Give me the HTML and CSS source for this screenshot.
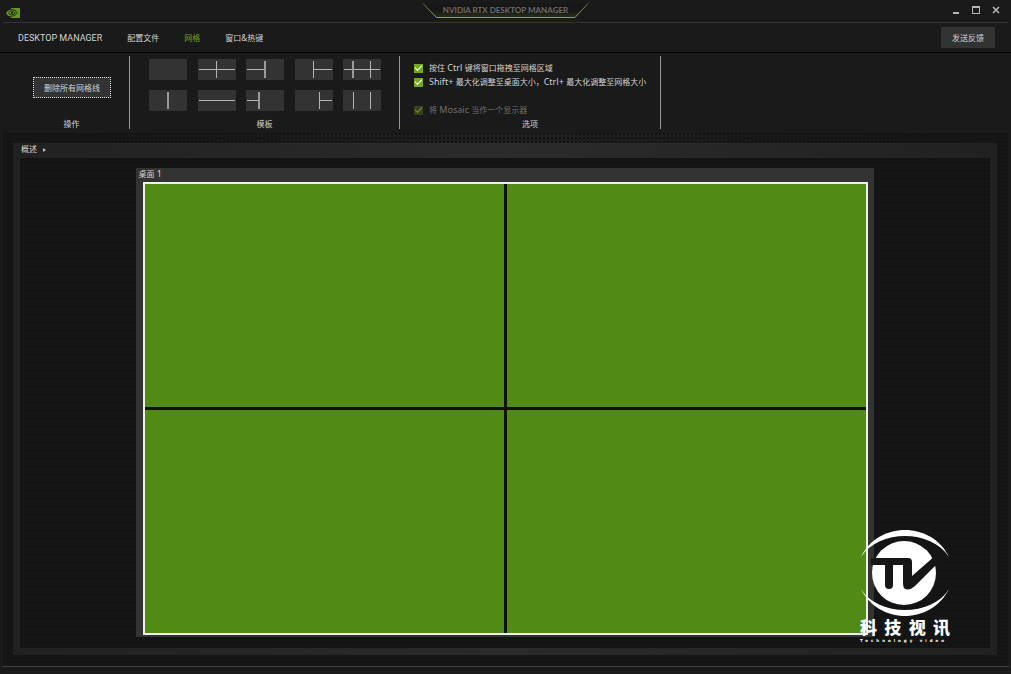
FILE: index.html
```html
<!DOCTYPE html>
<html lang="zh-CN">
<head>
<meta charset="utf-8">
<title>NVIDIA RTX Desktop Manager</title>
<link rel="stylesheet" href="styles.css">
</head>
<body>
<header class="titlebar">
  <svg class="app-logo" viewBox="0 0 14 10" aria-hidden="true">
    <path fill="#669520" d="M5 0h9v10H5V8.600C2.500 8.400.7 6.700 0 4.900 1 3.200 2.700 1.700 5 1.500z"/>
    <path fill="none" stroke="#1a2410" stroke-width=".9" d="M5 1.600c3-.3 5 1.300 6.300 3C10 6.800 7.800 8.500 5 8.200M5 3.100c2-.2 3.300.6 4.200 1.700C8.300 6.200 7 7 5.300 6.800 3.500 6.500 2.600 5.500 2.400 4.700 3 3.800 4 3.200 5 3.100z"/>
    <path fill="#1a2410" d="M5 4c1.300-.2 2 .3 2.600.9L6 6.200 5 5.800z"/>
  </svg>
  <div class="title-tab">
    <svg class="title-frame" viewBox="0 0 168 17" aria-hidden="true">
      <defs>
        <linearGradient id="edge" x1="0" y1="0" x2="0" y2="1"><stop offset="0" stop-color="#65704f"/><stop offset="1" stop-color="#86a748"/></linearGradient>
        <linearGradient id="glow" x1="0" y1="0" x2="0" y2="1"><stop offset=".5" stop-color="#171717"/><stop offset="1" stop-color="#29301b"/></linearGradient>
      </defs>
      <path fill="url(#glow)" stroke="url(#edge)" d="M1 .5 14.500 14.500h138.500L166 .5"/>
    </svg>
    <h1 class="title">NVIDIA RTX DESKTOP MANAGER</h1>
  </div>
  <div class="window-controls">
    <button class="wc" aria-label="最小化"><svg viewBox="0 0 8 8"><path stroke="#b5b5b5" stroke-width="2" d="M1 7h6"/></svg></button>
    <button class="wc" aria-label="最大化"><svg viewBox="0 0 8 8"><path fill="#b5b5b5" d="M0 0h8v8H0zM1 2v5h6V2z" fill-rule="evenodd"/></svg></button>
    <button class="wc" aria-label="关闭"><svg viewBox="0 0 8 8"><path stroke="#b5b5b5" stroke-width="1.600" d="m1 1 6 6M7 1 1 7"/></svg></button>
  </div>
</header>

<nav class="nav">
  <a class="nav-link latin-name" href="#manager">DESKTOP MANAGER</a>
  <a class="nav-link" href="#profiles">配置文件</a>
  <a class="nav-link active" href="#grid">网格</a>
  <a class="nav-link" href="#windows">窗口&amp;热键</a>
  <button class="feedback">发送反馈</button>
</nav>

<section class="ribbon">
  <div class="group group-actions">
    <div class="group-body"><button class="clear">删除所有网格线</button></div>
    <div class="group-name">操作</div>
  </div>
  <div class="group group-templates">
    <div class="group-body templates">
      <button class="tpl" aria-label="无"><svg viewBox="0 0 38 21"></svg></button>
      <button class="tpl" aria-label="四格"><svg viewBox="0 0 38 21"><path d="M1 10.500h36M18.500 2v17"/></svg></button>
      <button class="tpl" aria-label="左二右一"><svg viewBox="0 0 38 21"><path d="M1 10.500h18"/><path class="thick" d="M19 2v17"/></svg></button>
      <button class="tpl" aria-label="左一右二"><svg viewBox="0 0 38 21"><path d="M19 10.500h18M18.500 2v17"/></svg></button>
      <button class="tpl" aria-label="六格"><svg viewBox="0 0 38 21"><path d="M1 10.500h36M27.500 2v17"/><path class="thick" d="M10 2v17"/></svg></button>
      <button class="tpl" aria-label="左右"><svg viewBox="0 0 38 21"><path class="thick" d="M19 2v17"/></svg></button>
      <button class="tpl" aria-label="上下"><svg viewBox="0 0 38 21"><path d="M1 10.500h36"/></svg></button>
      <button class="tpl" aria-label="左窄二格"><svg viewBox="0 0 38 21"><path d="M1 10.500h12"/><path class="thick" d="M13 2v17"/></svg></button>
      <button class="tpl" aria-label="右窄二格"><svg viewBox="0 0 38 21"><path d="M25 10.500h12M24.500 2v17"/></svg></button>
      <button class="tpl" aria-label="三列"><svg viewBox="0 0 38 21"><path d="M10.500 2v17M27.500 2v17"/></svg></button>
    </div>
    <div class="group-name">模板</div>
  </div>
  <div class="group group-options">
    <div class="group-body options">
      <label class="option"><input class="check" type="checkbox" checked><span>按住<span class="latin"> Ctrl </span>键将窗口拖拽至网格区域</span></label>
      <label class="option"><input class="check" type="checkbox" checked><span><span class="latin">Shift+ </span>最大化调整至桌面大小，<span class="latin">Ctrl+ </span>最大化调整至网格大小</span></label>
      <label class="option disabled"><input class="check" type="checkbox" checked disabled><span>将<span class="latin"> Mosaic </span>当作一个显示器</span></label>
    </div>
    <div class="group-name">选项</div>
  </div>
</section>

<main class="workspace">
  <section class="panel">
    <h2 class="panel-title">概述<span class="caret"></span></h2>
    <div class="canvas">
      <div class="desktop">
        <h3 class="desktop-name">桌面<span class="latin"> 1</span></h3>
        <div class="screen"><div></div><div></div><div></div><div></div></div>
      </div>
    </div>
  </section>
</main>
<footer class="statusbar"></footer>

<div class="watermark">
  <svg class="mark" viewBox="0 0 88 86" aria-hidden="true">
    <g fill="#fff">
      <path d="M0 27C17-9 71-9 88 27 70-1 18-1 0 27z"/>
      <path d="M0 59C18 95 70 95 88 59 71 87 17 87 0 59z"/>
      <circle cx="43" cy="43" r="32"/>
    </g>
    <path fill="#161616" d="M10 28h37q4 0 4 4v14L75 25l3 7-24 24q-7 6-11 2-1-2-1-5V35H32v20q0 4-4 4t-4-4V35H10z"/>
  </svg>
  <div class="mark-name"><span>科</span><span>技</span><span>视</span><span>讯</span></div>
  <div class="mark-sub">Technology video</div>
</div>
</body>
</html>
```

FILE: styles.css
```css
* { box-sizing: border-box; }

body {
  margin: 0;
  height: 100vh;
  display: flex;
  flex-direction: column;
  background: #1a1a1a;
  color: #d2d2d2;
  font: 8px/14px "Noto Sans", "Noto Sans CJK SC", sans-serif;
  overflow: hidden;
}

h1, h2, h3 { margin: 0; font-size: inherit; font-weight: 400; }

button {
  margin: 0;
  padding: 0;
  border: 0;
  background: #333;
  color: inherit;
  font: inherit;
}

svg { display: block; }

.latin { font-size: 9px; white-space: pre; }

/* Title bar */
.titlebar {
  display: grid;
  grid-template-columns: 1fr 168px 1fr;
  height: 23px;
  margin: 0 3px;
  border-bottom: 1px solid #333;
}
.app-logo { width: 14px; height: 10px; margin: 8px 0 0 3px; }
.title-tab { display: grid; margin-top: 3px; }
.title-frame, .title { grid-area: 1 / 1; }
.title-frame { width: 168px; height: 17px; }
.title {
  color: #6c6c6c;
  font: 700 8px/15px Lato, sans-serif;
  text-align: center;
}
.window-controls {
  display: flex;
  justify-content: flex-end;
  gap: 12px;
  padding: 6px 8px 0 0;
}
.wc { width: 8px; height: 8px; background: none; }

/* Navigation */
.nav {
  display: flex;
  align-items: center;
  gap: 25px;
  height: 30px;
  padding: 0 16px 0 18px;
  border-bottom: 1px solid #050505;
}
.nav-link { color: #d2d2d2; text-decoration: none; }
.latin-name { font-family: Roboto, sans-serif; font-size: 9px; }
.active { color: #6fa51e; }
.feedback { margin-left: auto; width: 54px; height: 21px; }

/* Ribbon */
.ribbon { display: flex; height: 80px; padding: 3px 0 4px 14px; }
.group {
  display: flex;
  flex-direction: column;
  border-right: 1px solid #949494;
}
.group-actions { width: 116px; }
.group-templates { width: 270px; }
.group-options { width: 261px; }
.group-body { flex: 1; }
.group-name { height: 12px; line-height: 14px; text-align: center; }
.clear {
  width: 78px;
  height: 21px;
  margin: 21px 0 0 19px;
  border: 1px dotted #ddd;
}
.templates {
  display: grid;
  grid-template-columns: repeat(5, 38px);
  grid-auto-rows: 21px;
  row-gap: 10px;
  justify-content: space-between;
  padding: 3px 18px 0 19px;
}
.tpl path { fill: none; stroke: #b4b4b4; }
.tpl .thick { stroke: #9a9a9a; stroke-width: 2; }
.options { padding: 5px 0 0 14px; }
.option { display: flex; align-items: center; gap: 6px; height: 14px; white-space: nowrap; }
.disabled { margin-top: 14px; color: #6e6e6e; }
.check {
  appearance: none;
  display: grid;
  place-items: center;
  width: 9px;
  height: 9px;
  margin: 0;
  background: #76a81c;
}
.check::after {
  content: "";
  width: 6px;
  height: 3px;
  margin-bottom: 2px;
  border: solid #fff;
  border-width: 0 0 1px 1px;
  rotate: -45deg;
}
.check:disabled { background: #364316; }
.check:disabled::after { border-color: #7c8565; }

/* Workspace */
.workspace {
  flex: 1;
  display: flex;
  margin: 0 3px;
  padding: 10px 11px 11px 10px;
  background:
    radial-gradient(circle at 1px 1px, #131313 1px, transparent 1px) 0 0 / 4px 4px,
    radial-gradient(ellipse at 50% 0, #202020, #161616 60%);
}
.panel {
  flex: 1;
  display: flex;
  flex-direction: column;
  padding: 0 7px 7px;
  background: linear-gradient(90deg, #212121, #2b2b2b 50%, #212121);
}
.panel-title { height: 15px; padding-left: 1px; line-height: 12px; }
.caret {
  display: inline-block;
  margin-left: 6px;
  border: solid transparent;
  border-width: 2px 0 2px 3px;
  border-left-color: #bbb;
}
.canvas {
  flex: 1;
  display: flex;
  justify-content: center;
  padding: 10px 0 11px;
  background:
    radial-gradient(circle at 1px 1px, #121212 1px, transparent 1px) 0 0 / 4px 4px,
    #151515;
}
.desktop {
  display: flex;
  flex-direction: column;
  width: 76%;
  padding: 0 6px 2px 7px;
  background: #333;
}
.desktop-name { height: 14px; margin-left: -5px; line-height: 12px; }
.screen {
  flex: 1;
  display: grid;
  grid-template: 1fr 1fr / 1fr 1fr;
  gap: 3px;
  border: 2px solid #eef2e4;
  background: #0d1107;
}
.screen > div { background: #528a16; }

.statusbar { height: 8px; margin: 0 2px; border-top: 1px solid #424242; }

/* Watermark over the workspace */
.watermark {
  position: absolute;
  right: 61px;
  bottom: 31px;
  width: 90px;
  color: #fff;
}
.mark { width: 88px; height: 86px; margin-left: 1px; }
.mark-name {
  display: flex;
  justify-content: space-between;
  margin-top: 3px;
  font: 900 17px/16px "Noto Sans CJK SC", sans-serif;
}
.mark-sub {
  margin-top: 3px;
  font: 700 4px/5px "DejaVu Sans", sans-serif;
  letter-spacing: 3px;
  white-space: nowrap;
}
```
